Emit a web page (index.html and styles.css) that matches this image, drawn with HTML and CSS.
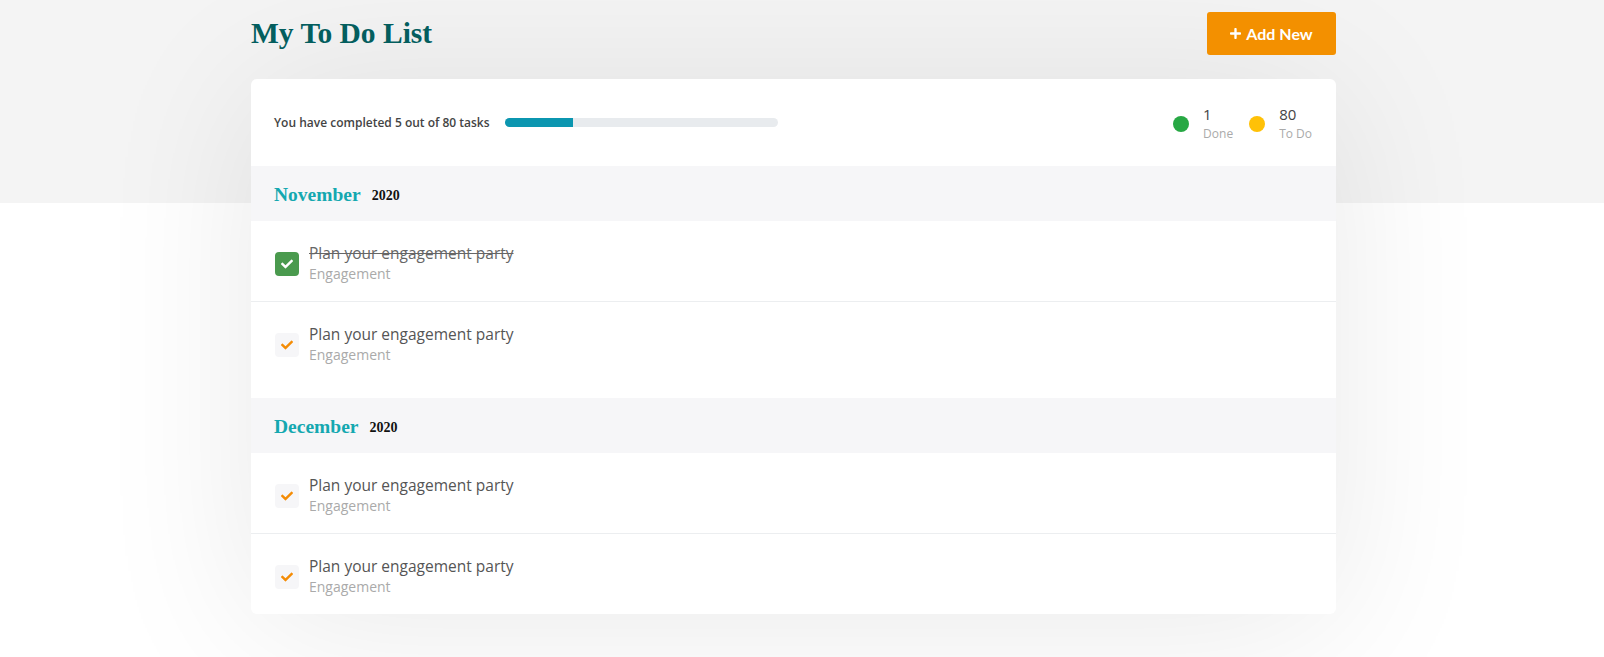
FILE: index.html
```html
<!DOCTYPE html>
<html lang="en">

<head>
    <meta charset="UTF-8">
    <meta name="viewport" content="width=device-width, initial-scale=1.0">
    <title>My To Do List</title>
    <link rel="stylesheet" href="styles.css">
</head>

<body>
    <div class="page">
        <div class="container">
            <header class="top">
                <h1>My To Do List</h1>
                <button class="btn-add">
                    <svg class="plus" viewBox="0 0 448 512"><path d="M416 208H272V64c0-17.67-14.33-32-32-32h-32c-17.67 0-32 14.33-32 32v144H32c-17.67 0-32 14.33-32 32v32c0 17.670 14.33 32 32 32h144v144c0 17.67 14.33 32 32 32h32c17.67 0 32-14.33 32-32V304h144c17.67 0 32-14.33 32-32v-32c0-17.67-14.33-32-32-32z"/></svg>
                    Add New
                </button>
            </header>

            <main class="card">
                <section class="summary">
                    <div class="progress-wrap">
                        <p class="progress-text">You have completed 5 out of 80 tasks</p>
                        <div class="progress"><div class="progress-fill" style="width: 25%"></div></div>
                    </div>
                    <div class="stats">
                        <div class="stat">
                            <span class="dot dot-done"></span>
                            <div>
                                <div class="stat-num">1</div>
                                <div class="stat-label">Done</div>
                            </div>
                        </div>
                        <div class="stat">
                            <span class="dot dot-todo"></span>
                            <div>
                                <div class="stat-num">80</div>
                                <div class="stat-label">To Do</div>
                            </div>
                        </div>
                    </div>
                </section>

                <section class="month">
                    <h2 class="month-title">November <span class="year">2020</span></h2>
                    <ul class="tasks">
                        <li class="task done">
                            <span class="check">
                                <svg viewBox="0 0 512 512"><path d="M173.9 439.4l-166.4-166.4c-10-10-10-26.2 0-36.2l36.2-36.2c10-10 26.2-10 36.2 0L192 312.7 432.1 72.6c10-10 26.2-10 36.2 0l36.2 36.2c10 10 10 26.2 0 36.2l-294.4 294.4c-10 10-26.2 10-36.2 0z"/></svg>
                            </span>
                            <div>
                                <div class="task-title">Plan your engagement party</div>
                                <div class="task-cat">Engagement</div>
                            </div>
                        </li>
                        <li class="task">
                            <span class="check">
                                <svg viewBox="0 0 512 512"><path d="M173.9 439.4l-166.4-166.4c-10-10-10-26.2 0-36.2l36.2-36.2c10-10 26.2-10 36.2 0L192 312.7 432.1 72.6c10-10 26.2-10 36.2 0l36.2 36.2c10 10 10 26.2 0 36.2l-294.4 294.4c-10 10-26.2 10-36.2 0z"/></svg>
                            </span>
                            <div>
                                <div class="task-title">Plan your engagement party</div>
                                <div class="task-cat">Engagement</div>
                            </div>
                        </li>
                    </ul>
                </section>

                <section class="month">
                    <h2 class="month-title">December <span class="year">2020</span></h2>
                    <ul class="tasks">
                        <li class="task">
                            <span class="check">
                                <svg viewBox="0 0 512 512"><path d="M173.9 439.4l-166.4-166.4c-10-10-10-26.2 0-36.2l36.2-36.2c10-10 26.2-10 36.2 0L192 312.7 432.1 72.6c10-10 26.2-10 36.2 0l36.2 36.2c10 10 10 26.2 0 36.2l-294.4 294.4c-10 10-26.2 10-36.2 0z"/></svg>
                            </span>
                            <div>
                                <div class="task-title">Plan your engagement party</div>
                                <div class="task-cat">Engagement</div>
                            </div>
                        </li>
                        <li class="task">
                            <span class="check">
                                <svg viewBox="0 0 512 512"><path d="M173.9 439.4l-166.4-166.4c-10-10-10-26.2 0-36.2l36.2-36.2c10-10 26.2-10 36.2 0L192 312.7 432.1 72.6c10-10 26.2-10 36.2 0l36.2 36.2c10 10 10 26.2 0 36.2l-294.4 294.4c-10 10-26.2 10-36.2 0z"/></svg>
                            </span>
                            <div>
                                <div class="task-title">Plan your engagement party</div>
                                <div class="task-cat">Engagement</div>
                            </div>
                        </li>
                    </ul>
                </section>
            </main>
        </div>
    </div>
</body>

</html>
```

FILE: styles.css
```css
* {
    margin: 0;
    padding: 0;
    box-sizing: border-box;
}

body {
    font-family: 'Open Sans', 'Lato', sans-serif;
    color: #555;
    background: linear-gradient(to bottom, #f4f4f4 0, #f4f4f4 203px, #fff 203px);
    min-height: 657px;
}

.page {
    padding-right: 17px;
}

.container {
    width: 1085px;
    margin: 0 auto;
}

/* Header */
.top {
    display: flex;
    justify-content: space-between;
    align-items: center;
    padding-top: 12px;
    margin-bottom: 24px;
}

.top h1 {
    font-family: 'Liberation Serif', serif;
    font-size: 29.5px;
    font-weight: bold;
    color: #035e5e;
}

.btn-add {
    display: flex;
    align-items: center;
    gap: 5px;
    height: 43px;
    width: 129px;
    justify-content: center;
    background: #f39000;
    color: white;
    border: none;
    border-radius: 3px;
    font-family: 'Lato', sans-serif;
    font-size: 16px;
    font-weight: bold;
    cursor: pointer;
}

.btn-add .plus {
    width: 11px;
    height: 13px;
    fill: white;
}

/* Card */
.card {
    background: white;
    border-radius: 6px;
    overflow: hidden;
    box-shadow: 0 10px 160px rgba(0, 0, 0, 0.09);
}

.summary {
    display: flex;
    justify-content: space-between;
    align-items: center;
    height: 87px;
    padding: 0 24px 0 23px;
}

.progress-wrap {
    display: flex;
    align-items: center;
}

.progress-text {
    font-size: 12px;
    font-weight: 600;
    color: #444;
    margin-right: 15px;
}

.progress {
    width: 273px;
    height: 9px;
    background: #e8ebee;
    border-radius: 5px;
    overflow: hidden;
}

.progress-fill {
    height: 100%;
    background: #0b96b0;
}

.stats {
    display: flex;
    gap: 16px;
    padding-top: 2px;
}

.stat {
    display: flex;
    align-items: center;
    gap: 14px;
}

.dot {
    width: 16px;
    height: 16px;
    border-radius: 50%;
}

.dot-done {
    background: #27a844;
}

.dot-todo {
    background: #ffc107;
}

.stat-num {
    font-size: 15px;
    color: #444;
    line-height: 20px;
}

.stat-label {
    font-size: 12px;
    color: #aaa;
    line-height: 20px;
}

/* Months */
.month-title {
    background: #f6f6f8;
    height: 55px;
    display: flex;
    align-items: center;
    gap: 11px;
    padding: 2px 23px 0;
    font-family: 'Liberation Serif', serif;
    font-size: 19.5px;
    color: #14a8b0;
}

.month-title .year {
    font-size: 14px;
    color: #111;
    padding-top: 3px;
}

.tasks {
    list-style: none;
}

.month:not(:last-child) .tasks {
    padding-bottom: 16px;
}

.task {
    display: flex;
    align-items: center;
    gap: 10px;
    padding: 21px 24px 17px;
    border-bottom: 1px solid #eceef0;
}

.task:last-child {
    border-bottom: none;
}

.check {
    width: 24px;
    height: 24px;
    border-radius: 4px;
    background: #f6f6f8;
    display: flex;
    align-items: center;
    justify-content: center;
    margin-top: 1px;
}

.check svg {
    width: 12px;
    height: 12px;
    fill: #f48c06;
}

.task.done .check {
    background: #4a9a4e;
}

.task.done .check svg {
    fill: white;
}

.task-title {
    font-size: 15.5px;
    line-height: 22px;
    color: #555;
}

.task.done .task-title {
    text-decoration: line-through;
    color: #666;
}

.task-cat {
    font-size: 14px;
    line-height: 20px;
    color: #aaa;
}
```
